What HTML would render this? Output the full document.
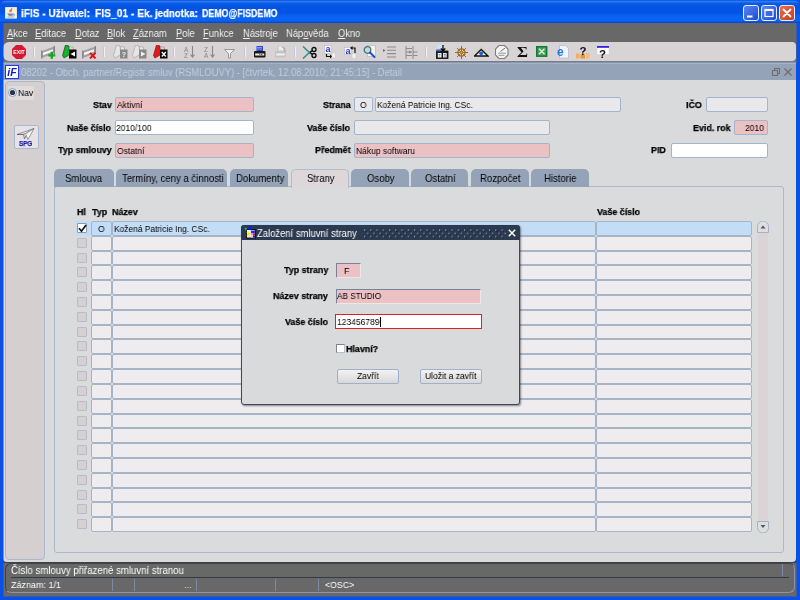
<!DOCTYPE html><html lang="cs"><head><meta charset="utf-8"><title>iFIS</title><style>
*{box-sizing:border-box;margin:0;padding:0}
html,body{width:800px;height:600px;overflow:hidden}
body{position:relative;background:#0a50e4;font-family:"Liberation Sans",Arial,sans-serif;font-size:10px;color:#000}
.a{position:absolute}
svg.a{will-change:transform}
.x{position:absolute;white-space:nowrap;line-height:14px;height:14px;transform-origin:0 50%;will-change:transform}
.b{font-weight:bold;-webkit-text-stroke:.25px}
#title{left:0;top:0;width:800px;height:23px;background:linear-gradient(#0a50da 0,#2a7af4 1.5px,#0a5ce8 3.5px,#0454e4 6px,#0454e4 13px,#0862f2 16px,#0862f2 21px,#0848d4 22.5px);border-radius:7px 7px 0 0}
#menubar{left:3px;top:23px;width:794px;height:19px;background:#696868}
#tbbg{left:3px;top:42px;width:794px;height:21px;background:#696868}
#toolbar{left:3px;top:42px;width:793px;height:19px;background:#d8d3d4;border-radius:6px 4px 4px 6px}
#mdi{left:3px;top:61px;width:793px;height:19px;background:linear-gradient(#747b8b 0,#747b8b 1px,#8a94a8 1px,#8a94a8 2px,#a4b2c8 2px,#a4b2c8 3px,#95a3b8 3px)}
#content{left:3px;top:80px;width:793px;height:482px;background:#d9dadb;border-radius:0 0 4px 4px}
#nav{left:5px;top:81px;width:40px;height:479px;background:#d6cfd0;border:1px solid #a9b8cc;border-radius:4px}
.fld{height:15px;border:1px solid #a3b4cb;border-radius:2px}
.pink{background:#ecc1c4}
.gray{background:#e9e9ec}
.white{background:#fff}
.tab{top:169px;height:18px;background:#95a3b8;border-radius:5px 5px 0 0}
.tab.sel{background:#ded7d9;border:1px solid #b0bccf;border-bottom:none;height:19px}
#panel{left:54px;top:186px;width:730px;height:367px;border:1px solid #acb8ca;border-radius:3px;background:#dadbdc}
.cell{height:15px;border:1px solid #a6b4c8;border-radius:2px;background:#eeecef}
.cell.sel{background:#c3ddf6}
.cb{width:10px;height:10px;background:#d4d0d4;border:1px solid #b9bcc6;border-radius:1px}
#status{left:3px;top:562px;width:794px;height:35px;background:#696868;border-top:1px solid #404040}
#dlg{left:241px;top:225px;width:279px;height:180px;background:#d9dadb;border:1px solid #3c4860;border-radius:3px;box-shadow:1px 1px 2px rgba(0,0,0,.45)}
#dlgt{left:241px;top:225px;width:279px;height:15px;background:#2c3a50;border-radius:3px 3px 0 0}
.btn{height:15px;border:1px solid #9fb0c8;border-radius:2px;background:linear-gradient(#f2f2f2,#d8d8d8)}
</style></head><body>
<div class="a" id="title"></div>
<div class="x b" style="left:20.5px;top:5.5px;font-size:11.61px;transform:scaleX(0.8698);color:#fff;">iFIS - Uživatel:</div>
<div class="x b" style="left:94.8px;top:5.5px;font-size:11.79px;transform:scaleX(0.8699);color:#fff;">FIS_01 - Ek.</div>
<div class="x b" style="left:154.5px;top:6.0px;font-size:11.10px;transform:scaleX(0.8697);color:#fff;">jednotka:</div>
<div class="x b" style="left:202.3px;top:6.5px;font-size:10.18px;transform:scaleX(0.8700);color:#fff;">DEMO@FISDEMO</div>
<div class="a" id="menubar"></div>
<div class="x" style="left:6.5px;top:26.0px;font-size:10.57px;transform:scaleX(0.8851);color:#f0f0f0;"><u>A</u>kce</div>
<div class="x" style="left:35.0px;top:26.0px;font-size:10.57px;transform:scaleX(0.8851);color:#f0f0f0;"><u>E</u>ditace</div>
<div class="x" style="left:75.2px;top:26.0px;font-size:10.57px;transform:scaleX(0.8846);color:#f0f0f0;"><u>D</u>otaz</div>
<div class="x" style="left:107.0px;top:26.0px;font-size:10.57px;transform:scaleX(0.8846);color:#f0f0f0;"><u>B</u>lok</div>
<div class="x" style="left:133.2px;top:26.0px;font-size:10.57px;transform:scaleX(0.8851);color:#f0f0f0;"><u>Z</u>áznam</div>
<div class="x" style="left:175.5px;top:26.0px;font-size:10.57px;transform:scaleX(0.8845);color:#f0f0f0;"><u>P</u>ole</div>
<div class="x" style="left:203.2px;top:26.0px;font-size:10.57px;transform:scaleX(0.8851);color:#f0f0f0;"><u>F</u>unkce</div>
<div class="x" style="left:242.5px;top:26.0px;font-size:10.57px;transform:scaleX(0.8849);color:#f0f0f0;"><u>N</u>ástroje</div>
<div class="x" style="left:286.2px;top:26.0px;font-size:10.57px;transform:scaleX(0.8848);color:#f0f0f0;">Náp<u>o</u>věda</div>
<div class="x" style="left:338.2px;top:26.0px;font-size:10.57px;transform:scaleX(0.8850);color:#f0f0f0;"><u>O</u>kno</div>
<div class="a" id="tbbg"></div><div class="a" id="toolbar"></div>
<svg class="a" style="left:5px;top:6.5px" width="12" height="11.5" viewBox="0 0 12 11.5"><rect x="0" y="0" width="12" height="11.500" rx=".8" fill="#f0efe8" stroke="#c8c8c0" stroke-width=".5"/><path d="M6.500 1.200c1.300 1.200-1.600 2.200-.3 3.900M5 2.500c.8.800-.8 1.500 0 2.500" stroke="#e87010" stroke-width="1.200" fill="none"/><path d="M2.500 6.500h6c0 1.500-.8 2.500-3 2.500s-3-1-3-2.500z" fill="#7088b0"/><path d="M8.500 7c1.500 0 1.500 1.800 0 1.600" stroke="#5878a8" stroke-width=".7" fill="none"/><path d="M2.500 10h6.500" stroke="#8898b8" stroke-width=".8"/></svg>
<svg class="a" style="left:743px;top:5px" width="16" height="16" viewBox="0 0 16 16"><defs><linearGradient id="g743" x1="0" y1="0" x2="1" y2="1"><stop offset="0" stop-color="#5c88f4"/><stop offset="1" stop-color="#1c48d0"/></linearGradient></defs><rect x=".5" y=".5" width="15" height="15" rx="2.500" fill="url(#g743)" stroke="#e8eefc" stroke-width="1"/><rect x="4" y="10.500" width="5.500" height="2" fill="#fff"/></svg>
<svg class="a" style="left:761px;top:5px" width="16" height="16" viewBox="0 0 16 16"><defs><linearGradient id="g761" x1="0" y1="0" x2="1" y2="1"><stop offset="0" stop-color="#5c88f4"/><stop offset="1" stop-color="#1c48d0"/></linearGradient></defs><rect x=".5" y=".5" width="15" height="15" rx="2.500" fill="url(#g761)" stroke="#e8eefc" stroke-width="1"/><rect x="4" y="4.500" width="8" height="7" fill="none" stroke="#fff" stroke-width="1.200"/><rect x="4" y="4" width="8" height="2" fill="#fff"/></svg>
<svg class="a" style="left:779px;top:5px" width="16" height="16" viewBox="0 0 16 16"><defs><linearGradient id="g779" x1="0" y1="0" x2="1" y2="1"><stop offset="0" stop-color="#ec7050"/><stop offset="1" stop-color="#c83818"/></linearGradient></defs><rect x=".5" y=".5" width="15" height="15" rx="2.500" fill="url(#g779)" stroke="#e8eefc" stroke-width="1"/><path d="M4.500 4.500l7 7M11.500 4.500l-7 7" stroke="#fff" stroke-width="1.800" stroke-linecap="round"/></svg>
<svg class="a" style="left:12px;top:45px" width="14" height="14" viewBox="0 0 14 14"><polygon points="4.100,0 9.900,0 14,4.100 14,9.900 9.900,14 4.100,14 0,9.900 0,4.100" fill="#d81830"/><text x="7" y="8.900" font-family="Liberation Sans,sans-serif" font-weight="bold" font-size="5.200" fill="#fff" text-anchor="middle">EXIT</text></svg>
<div class="a" style="left:32.8px;top:47px;width:1px;height:10px;background:#bcc8dc"></div><div class="a" style="left:33.8px;top:47px;width:1px;height:10px;background:#f0f0f6"></div>
<svg class="a" style="left:41px;top:45px" width="15" height="14" viewBox="0 0 15 14"><path d="M.8 6l12.500-4.500v7l-12.500 4.500z" fill="#a2a2a2"/><path d="M2 7.800l10-3.600v2.400l-10 3.600z" fill="#f8f8f8"/><path d="M.8 5.500v8M13.300 1v8" stroke="#787878" stroke-width="1.100"/><path d="M10.800 6.800v7M7.300 10.300h7" stroke="#10a820" stroke-width="2.300"/></svg>
<svg class="a" style="left:61.5px;top:45px" width="15" height="14" viewBox="0 0 15 14"><path d="M3.500 0l3.500 1 .8 8.500-5.800 3.500-1.500-2.500z" fill="#18b030" stroke="#085010" stroke-width=".7"/><path d="M7.500 1.500l4 .8v3l-4 .5z" fill="#d8d8d8" stroke="#909090" stroke-width=".5"/><rect x="7" y="4.500" width="7.500" height="9" fill="#080808"/><path d="M13 6.500v5l-4.500-2.500z" fill="#fff"/></svg>
<svg class="a" style="left:81.5px;top:45px" width="15" height="14" viewBox="0 0 15 14"><path d="M.8 6l12.500-4.500v7l-12.500 4.500z" fill="#a2a2a2"/><path d="M2 7.800l10-3.600v2.400l-10 3.600z" fill="#f8f8f8"/><path d="M.8 5.500v8M13.300 1v8" stroke="#787878" stroke-width="1.100"/><path d="M8 7.800l5.500 5.700M13.500 7.800l-5.500 5.700" stroke="#e01010" stroke-width="1.900"/></svg>
<div class="a" style="left:102.9px;top:47px;width:1px;height:10px;background:#bcc8dc"></div><div class="a" style="left:103.9px;top:47px;width:1px;height:10px;background:#f0f0f6"></div>
<svg class="a" style="left:112.5px;top:45px" width="15" height="14" viewBox="0 0 15 14"><path d="M3.500 0l3.500 1 .8 8.500-5.800 3.500-1.500-2.500z" fill="#e6e6e6" stroke="#a8a8a8" stroke-width=".7"/><path d="M7.500 1.500l4 .8v3l-4 .5z" fill="#e8e8e8" stroke="#909090" stroke-width=".5"/><rect x="7" y="4.500" width="7.500" height="9" fill="#888888"/><text x="10.800" y="12.300" font-size="7" font-weight="bold" font-family="Liberation Sans,sans-serif" fill="#f0f0f0" text-anchor="middle">?</text></svg>
<svg class="a" style="left:132px;top:45px" width="15" height="14" viewBox="0 0 15 14"><path d="M3.500 0l3.500 1 .8 8.500-5.800 3.500-1.500-2.500z" fill="#e6e6e6" stroke="#a8a8a8" stroke-width=".7"/><path d="M7.500 1.500l4 .8v3l-4 .5z" fill="#e8e8e8" stroke="#909090" stroke-width=".5"/><rect x="7" y="4.500" width="7.500" height="9" fill="#888888"/><path d="M9 6.500v5l4.500-2.500z" fill="#f0f0f0"/></svg>
<svg class="a" style="left:152.5px;top:45px" width="15" height="14" viewBox="0 0 15 14"><path d="M3.500 0l3.500 1 .8 8.500-5.800 3.500-1.500-2.500z" fill="#e81818" stroke="#801010" stroke-width=".7"/><path d="M7.500 1.500l4 .8v3l-4 .5z" fill="#f0c0c0" stroke="#909090" stroke-width=".5"/><rect x="7" y="4.500" width="7.500" height="9" fill="#080808"/><path d="M8.800 7l4 4.500M12.800 7l-4 4.500" stroke="#fff" stroke-width="1.300"/></svg>
<div class="a" style="left:173.3px;top:47px;width:1px;height:10px;background:#bcc8dc"></div><div class="a" style="left:174.3px;top:47px;width:1px;height:10px;background:#f0f0f6"></div>
<svg class="a" style="left:184px;top:45px" width="12" height="14" viewBox="0 0 12 14"><text x="0" y="6.500" font-size="6.500" font-family="Liberation Sans,sans-serif" fill="#888888">A</text><text x="0" y="13" font-size="6.500" font-family="Liberation Sans,sans-serif" fill="#888888">Z</text><path d="M8.500 1v11M6.500 9.500l2 2.500 2-2.500" stroke="#888888" stroke-width="1.100" fill="none"/></svg>
<svg class="a" style="left:204px;top:45px" width="12" height="14" viewBox="0 0 12 14"><text x="0" y="6.500" font-size="6.500" font-family="Liberation Sans,sans-serif" fill="#888888">Z</text><text x="0" y="13" font-size="6.500" font-family="Liberation Sans,sans-serif" fill="#888888">A</text><path d="M8.500 1v11M6.500 9.500l2 2.500 2-2.500" stroke="#888888" stroke-width="1.100" fill="none"/></svg>
<svg class="a" style="left:224px;top:48.5px" width="11" height="9.5" viewBox="0 0 11 9.5"><path d="M.5.500h10l-4 4v4.500h-2v-4.500z" fill="#f0f0f0" stroke="#909090" stroke-width=".9"/></svg>
<div class="a" style="left:243.7px;top:47px;width:1px;height:10px;background:#bcc8dc"></div><div class="a" style="left:244.7px;top:47px;width:1px;height:10px;background:#f0f0f6"></div>
<svg class="a" style="left:253.5px;top:46px" width="11.5" height="12" viewBox="0 0 11.5 12"><rect x="2.500" y="0" width="6.500" height="5" fill="#3048d8"/><path d="M3 1.500h5M3 3h5" stroke="#c0c8ff" stroke-width=".6"/><rect x="0" y="5" width="11.500" height="6.500" rx="1" fill="#181818"/><rect x="1.200" y="7.500" width="9" height="2" fill="#f0f0f0"/><rect x="5" y="7.800" width="1.500" height="1.300" fill="#20b020"/><rect x="7" y="7.800" width="1.500" height="1.300" fill="#e02020"/></svg>
<svg class="a" style="left:274.5px;top:46px" width="11.5" height="12" viewBox="0 0 11.5 12"><rect x="3" y="0" width="6" height="5" fill="#ececec" stroke="#b0b0b0" stroke-width=".6"/><rect x="0" y="5" width="11" height="6.500" rx="1" fill="#c4c4c4"/><rect x="1.200" y="7.500" width="8.500" height="2" fill="#f0f0f0"/><path d="M7 1l3 2v3" stroke="#a0a0a0" stroke-width="1" fill="none"/></svg>
<div class="a" style="left:293.8px;top:47px;width:1px;height:10px;background:#bcc8dc"></div><div class="a" style="left:294.8px;top:47px;width:1px;height:10px;background:#f0f0f6"></div>
<svg class="a" style="left:301.5px;top:45.5px" width="15.5" height="13" viewBox="0 0 15.5 13"><path d="M1 .5l8 7.500M1 12.500l8-7.500" stroke="#389088" stroke-width="1.600" fill="none"/><circle cx="12" cy="3.500" r="2" fill="none" stroke="#101010" stroke-width="1.400"/><circle cx="12" cy="9.500" r="2" fill="none" stroke="#101010" stroke-width="1.400"/><path d="M8 6.500l2.500-2M8 6.500l2.500 2" stroke="#101010" stroke-width="1.200"/></svg>
<svg class="a" style="left:324px;top:45px" width="12" height="14" viewBox="0 0 12 14"><rect x=".5" y=".5" width="6.500" height="8" fill="#fff" stroke="#b8b8b8" stroke-width=".6"/><text x="1.500" y="7" font-size="9" font-family="Liberation Sans,sans-serif" fill="#2030e0" font-weight="bold">a</text><path d="M2.500 9v2.500h4" stroke="#101010" stroke-width="1.200" fill="none"/><path d="M6 9.500l2.500 2-2.500 2z" fill="#101010"/><rect x="8" y="8" width="3.500" height="5" fill="#f4f4f4" stroke="#c0c0c0" stroke-width=".5"/></svg>
<svg class="a" style="left:344px;top:45px" width="12.5" height="14" viewBox="0 0 12.5 14"><rect x=".5" y="2.500" width="6.500" height="7" fill="#fff" stroke="#b8b8b8" stroke-width=".6"/><text x="1.500" y="9" font-size="9" font-family="Liberation Sans,sans-serif" fill="#2030e0" font-weight="bold">a</text><path d="M11 8v-5h-3.500" stroke="#101010" stroke-width="1.200" fill="none"/><path d="M8.500 1l-2.500 2 2.500 2z" fill="#101010"/><rect x="8" y="8.500" width="4" height="5" fill="#f0f0f0" stroke="#c0c0c0" stroke-width=".5"/></svg>
<svg class="a" style="left:363px;top:45px" width="14.5" height="14" viewBox="0 0 14.5 14"><rect x="4.500" y=".5" width="8" height="11" fill="#f4f4ec" stroke="#b0b0a8" stroke-width=".6"/><circle cx="4.500" cy="5" r="3.300" fill="#b8e0e0" stroke="#507080" stroke-width="1.300"/><path d="M7 7.500l4.500 4.500" stroke="#2050c0" stroke-width="2" stroke-linecap="round"/></svg>
<svg class="a" style="left:383px;top:46px" width="13" height="12" viewBox="0 0 13 12"><path d="M4 1h9M4 4.300h9M4 7.600h9M4 11h9" stroke="#8c8c8c" stroke-width="1.100"/><path d="M0 3l2.500 1.500-2.500 1.500z" fill="#707070"/></svg>
<svg class="a" style="left:405px;top:45.5px" width="13" height="13" viewBox="0 0 13 13"><path d="M1 0v13M8 0v13" stroke="#8c8c8c" stroke-width="1"/><path d="M1 2.500h6M1 6h6M1 9.500h6M8 6h4.500M8 9.500h4.500" stroke="#8c8c8c" stroke-width="1"/><path d="M4 4.500l2.500 1.500-2.500 1.500z" fill="#808080"/></svg>
<div class="a" style="left:425.2px;top:47px;width:1px;height:10px;background:#bcc8dc"></div><div class="a" style="left:426.2px;top:47px;width:1px;height:10px;background:#f0f0f6"></div>
<svg class="a" style="left:435.5px;top:45px" width="12.5" height="14" viewBox="0 0 12.5 14"><rect x="1" y="0" width="7" height="3" fill="#c8e4f8"/><path d="M7 0v5.500M4.800 3.500l2.200 2.500 2.200-2.500" stroke="#080808" stroke-width="1.300" fill="none"/><rect x=".5" y="6" width="11.500" height="7.500" fill="#181820" stroke="#080808" stroke-width=".8"/><rect x="1.800" y="8" width="3.700" height="4.500" fill="#fff"/><rect x="7" y="8" width="3.700" height="4.500" fill="#e4e4f0"/><rect x=".5" y="4.500" width="4" height="2" fill="#3060d8"/><path d="M2.500 9.500h2M2.500 11h2M7.800 9.500h2M7.800 11h2" stroke="#505060" stroke-width=".6"/></svg>
<svg class="a" style="left:454.5px;top:45.5px" width="13" height="13" viewBox="0 0 13 13"><circle cx="6.500" cy="6.500" r="3.600" fill="none" stroke="#a06820" stroke-width="1.300"/><path d="M6.500 0v13M0 6.500h13M2 2l9 9M11 2l-9 9" stroke="#a06820" stroke-width="1"/><circle cx="6.500" cy="6.500" r="1.300" fill="#c89040"/></svg>
<svg class="a" style="left:474px;top:47px" width="14.5" height="9.5" viewBox="0 0 14.5 9.5"><path d="M3 2l1.500 1.500M11.500 2l-1.500 1.500M7.200 0v2" stroke="#e8d020" stroke-width=".9"/><path d="M.5 9l6.700-6.500 6.800 6.500z" fill="#f0f0e8" stroke="#101010" stroke-width="1.300"/><circle cx="7.200" cy="6.300" r="1.900" fill="#1060f0"/></svg>
<svg class="a" style="left:494.5px;top:45px" width="13.5" height="14" viewBox="0 0 13.5 14"><polygon points="4,0.500 9.500,0.500 13,4 13,10 9.500,13.500 4,13.500 .5,10 .5,4" fill="#f4f4f4" stroke="#7c7c7c" stroke-width="1.100"/><path d="M3 8.200h8M3.500 10.300h6" stroke="#8c8c8c" stroke-width=".9"/><path d="M5.500 6.500l4.500-3.500" stroke="#6c6c6c" stroke-width="1"/></svg>
<svg class="a" style="left:516px;top:44px" width="13" height="15" viewBox="0 0 13 15"><text x="6.500" y="13" font-size="15.500" font-weight="bold" font-family="Liberation Serif,serif" fill="#101010" text-anchor="middle" textLength="11" lengthAdjust="spacingAndGlyphs">Σ</text></svg>
<svg class="a" style="left:536px;top:46px" width="11.5" height="11" viewBox="0 0 11.5 11"><rect x=".7" y=".7" width="10" height="9.500" fill="#4c9c60" stroke="#107830" stroke-width="1.400"/><path d="M3 2.800l5.500 5.500M8.500 2.800l-5.500 5.500" stroke="#d8f0d8" stroke-width="1.400"/></svg>
<svg class="a" style="left:556.5px;top:45px" width="12" height="14" viewBox="0 0 12 14"><path d="M2.500.5h6l3 3v9.500h-9z" fill="#f4f4fc" stroke="#a8b0c8" stroke-width=".6"/><text x="0" y="11" font-size="12" font-weight="bold" font-family="Liberation Sans,sans-serif" fill="#2878e0">e</text></svg>
<svg class="a" style="left:576px;top:45px" width="14" height="14" viewBox="0 0 14 14"><rect x="0" y="8.500" width="3.500" height="5" fill="#f0b060"/><rect x="4.500" y="9.500" width="4.500" height="4" fill="#e89838"/><rect x="10" y="8" width="3.500" height="5.500" fill="#f0c080"/><text x="7" y="9.500" font-size="11.500" font-weight="bold" font-family="Liberation Sans,sans-serif" fill="#101010" text-anchor="middle">?</text></svg>
<svg class="a" style="left:597px;top:46px" width="12" height="13" viewBox="0 0 12 13"><rect x="0" y="0" width="12" height="8.500" fill="#fff" stroke="#c8c8c8" stroke-width=".5"/><rect x="0" y="0" width="12" height="1.800" fill="#3020e0"/><text x="5.500" y="12" font-size="11.500" font-weight="bold" font-family="Liberation Sans,sans-serif" fill="#101010" text-anchor="middle">?</text></svg>
<div class="a" id="mdi"></div>
<svg class="a" style="left:5px;top:65px" width="14" height="14" viewBox="0 0 14 14"><rect x=".5" y=".5" width="13" height="13" fill="#fff" stroke="#2838e0" stroke-width="1"/><text x="7" y="11" font-size="10.500" font-weight="bold" font-style="italic" font-family="Liberation Sans,sans-serif" fill="#1020c8" text-anchor="middle">iF</text></svg>
<svg class="a" style="left:772px;top:68px" width="8" height="8" viewBox="0 0 8 8"><rect x="2.500" y=".5" width="5" height="5" fill="none" stroke="#6c6c6c" stroke-width="1"/><rect x=".5" y="2.500" width="5" height="5" fill="#95a3b8" stroke="#6c6c6c" stroke-width="1"/></svg>
<svg class="a" style="left:784px;top:68px" width="8" height="8" viewBox="0 0 8 8"><path d="M.5.500l7 7M7.500.500l-7 7" stroke="#6c6c6c" stroke-width="1.200"/></svg>
<div class="x" style="left:20.5px;top:65.5px;font-size:10.15px;transform:scaleX(0.9283);color:#c2cddd;">08202 - Obch. partner/Registr smluv (RSMLOUVY) - [čtvrtek, 12.08.2010; 21:45:15] - Detail</div>
<div class="a" id="content"></div>
<div class="a" id="nav"></div>
<div class="a" style="left:8px;top:86px;width:26px;height:14px;background:#e0dcde;border-radius:2px"></div>
<svg class="a" style="left:8px;top:88px" width="9" height="9" viewBox="0 0 9 9"><circle cx="4.500" cy="4.500" r="4" fill="#f0f0f4" stroke="#8c9cb4" stroke-width="1"/><circle cx="4.500" cy="4.500" r="2.600" fill="#28344c"/></svg>
<div class="x" style="left:18.2px;top:85.6px;font-size:9.29px;transform:scaleX(0.9260);">Nav</div>
<div class="a" style="left:14px;top:125px;width:25px;height:24px;background:#e6e2e6;border:1px solid #a8b8d0;border-radius:2px"></div>
<svg class="a" style="left:16px;top:127px" width="21" height="14" viewBox="0 0 21 14"><path d="M1 7.500l17-6-6 11-2.500-5.500z" fill="#fcfcfc" stroke="#707070" stroke-width=".7"/><path d="M18 1.500l-10.500 6 1 4.500 1.500-3.500" fill="#d8d8d8" stroke="#505050" stroke-width=".6"/><path d="M1 7.500l6.500 0" stroke="#505050" stroke-width=".6"/></svg>
<div class="x b" style="left:18.8px;top:137.3px;font-size:6.80px;transform:scaleX(0.9266);color:#2020a8;">SPG</div>
<div class="a fld pink" style="left:115px;top:97px;width:139px;"></div>
<div class="a fld white" style="left:115px;top:120px;width:139px;"></div>
<div class="a fld pink" style="left:115px;top:143px;width:139px;"></div>
<div class="a fld gray" style="left:354px;top:97px;width:19px;"></div>
<div class="a fld gray" style="left:375px;top:97px;width:246px;"></div>
<div class="a fld gray" style="left:354px;top:120px;width:196px;"></div>
<div class="a fld pink" style="left:354px;top:143px;width:196px;"></div>
<div class="a fld gray" style="left:706px;top:97px;width:62px;"></div>
<div class="a fld pink" style="left:734px;top:120px;width:34px;"></div>
<div class="a fld white" style="left:671px;top:143px;width:97px;"></div>
<div class="x b" style="left:92.5px;top:97.5px;font-size:9.61px;transform:scaleX(0.9276);">Stav</div>
<div class="x b" style="left:67.3px;top:120.5px;font-size:9.61px;transform:scaleX(0.9275);">Naše číslo</div>
<div class="x b" style="left:57.6px;top:143.2px;font-size:9.61px;transform:scaleX(0.9275);">Typ smlouvy</div>
<div class="x b" style="left:322.6px;top:97.5px;font-size:9.61px;transform:scaleX(0.9276);">Strana</div>
<div class="x b" style="left:307.3px;top:120.5px;font-size:9.61px;transform:scaleX(0.9276);">Vaše číslo</div>
<div class="x b" style="left:314.7px;top:143.2px;font-size:9.61px;transform:scaleX(0.9276);">Předmět</div>
<div class="x b" style="left:685.7px;top:97.5px;font-size:9.61px;transform:scaleX(0.9273);">IČO</div>
<div class="x b" style="left:692.7px;top:120.5px;font-size:9.61px;transform:scaleX(0.9274);">Evid. rok</div>
<div class="x b" style="left:651.0px;top:143.2px;font-size:9.61px;transform:scaleX(0.9273);">PID</div>
<div class="x" style="left:116.7px;top:98.0px;font-size:9.18px;transform:scaleX(0.9265);">Aktivní</div>
<div class="x" style="left:116.1px;top:121.0px;font-size:9.18px;transform:scaleX(0.9264);">2010/100</div>
<div class="x" style="left:116.7px;top:143.7px;font-size:9.18px;transform:scaleX(0.9263);">Ostatní</div>
<div class="x" style="left:359.9px;top:98.0px;font-size:9.18px;transform:scaleX(0.9259);">O</div>
<div class="x" style="left:376.5px;top:98.0px;font-size:9.07px;transform:scaleX(0.9268);">Kožená Patricie Ing. CSc.</div>
<div class="x" style="left:355.8px;top:143.7px;font-size:9.18px;transform:scaleX(0.9265);">Nákup softwaru</div>
<div class="x" style="left:745.4px;top:121.0px;font-size:9.18px;transform:scaleX(0.9265);">2010</div>
<div class="a" id="panel"></div>
<div class="a tab" style="left:54px;width:60px"></div>
<div class="a tab" style="left:116px;width:111px"></div>
<div class="a tab" style="left:230px;width:58px"></div>
<div class="a tab sel" style="left:291px;width:58px"></div>
<div class="a tab" style="left:351px;width:58px"></div>
<div class="a tab" style="left:411px;width:57px"></div>
<div class="a tab" style="left:471px;width:58px"></div>
<div class="a tab" style="left:531px;width:58px"></div>
<div class="x" style="left:65.4px;top:172.0px;font-size:10.31px;transform:scaleX(0.9274);">Smlouva</div>
<div class="x" style="left:121.9px;top:172.0px;font-size:10.31px;transform:scaleX(0.9274);">Termíny, ceny a činnosti</div>
<div class="x" style="left:236.2px;top:172.0px;font-size:10.31px;transform:scaleX(0.9274);">Dokumenty</div>
<div class="x" style="left:306.8px;top:172.0px;font-size:10.31px;transform:scaleX(0.9272);">Strany</div>
<div class="x" style="left:366.5px;top:172.0px;font-size:10.31px;transform:scaleX(0.9272);">Osoby</div>
<div class="x" style="left:425.2px;top:172.0px;font-size:10.31px;transform:scaleX(0.9271);">Ostatní</div>
<div class="x" style="left:480.3px;top:172.0px;font-size:10.31px;transform:scaleX(0.9271);">Rozpočet</div>
<div class="x" style="left:544.2px;top:172.0px;font-size:10.31px;transform:scaleX(0.9273);">Historie</div>
<div class="x b" style="left:76.5px;top:204.8px;font-size:9.61px;transform:scaleX(0.9277);">Hl</div>
<div class="x b" style="left:91.5px;top:204.8px;font-size:9.61px;transform:scaleX(0.9276);">Typ</div>
<div class="x b" style="left:112.0px;top:204.8px;font-size:9.61px;transform:scaleX(0.9276);">Název</div>
<div class="x b" style="left:597.0px;top:204.8px;font-size:9.61px;transform:scaleX(0.9276);">Vaše číslo</div>
<div class="a" style="left:76px;top:221.00px;width:16px;height:15px;background:#c3ddf6"></div>
<div class="a cb" style="left:77px;top:223.00px;background:#fff;border-color:#8a98ad"></div>
<div class="a cell sel" style="left:91px;top:221px;width:21px;height:15px"></div>
<div class="a cell sel" style="left:112px;top:221px;width:484px;height:15px"></div>
<div class="a cell sel" style="left:596px;top:221px;width:156px;height:15px"></div>
<div class="a cb" style="left:77px;top:237.81px"></div>
<div class="a cell" style="left:91px;top:236px;width:21px;height:15px"></div>
<div class="a cell" style="left:112px;top:236px;width:484px;height:15px"></div>
<div class="a cell" style="left:596px;top:236px;width:156px;height:15px"></div>
<div class="a cb" style="left:77px;top:252.62px"></div>
<div class="a cell" style="left:91px;top:251px;width:21px;height:14px"></div>
<div class="a cell" style="left:112px;top:251px;width:484px;height:14px"></div>
<div class="a cell" style="left:596px;top:251px;width:156px;height:14px"></div>
<div class="a cb" style="left:77px;top:267.43px"></div>
<div class="a cell" style="left:91px;top:265px;width:21px;height:15px"></div>
<div class="a cell" style="left:112px;top:265px;width:484px;height:15px"></div>
<div class="a cell" style="left:596px;top:265px;width:156px;height:15px"></div>
<div class="a cb" style="left:77px;top:282.24px"></div>
<div class="a cell" style="left:91px;top:280px;width:21px;height:15px"></div>
<div class="a cell" style="left:112px;top:280px;width:484px;height:15px"></div>
<div class="a cell" style="left:596px;top:280px;width:156px;height:15px"></div>
<div class="a cb" style="left:77px;top:297.05px"></div>
<div class="a cell" style="left:91px;top:295px;width:21px;height:15px"></div>
<div class="a cell" style="left:112px;top:295px;width:484px;height:15px"></div>
<div class="a cell" style="left:596px;top:295px;width:156px;height:15px"></div>
<div class="a cb" style="left:77px;top:311.86px"></div>
<div class="a cell" style="left:91px;top:310px;width:21px;height:15px"></div>
<div class="a cell" style="left:112px;top:310px;width:484px;height:15px"></div>
<div class="a cell" style="left:596px;top:310px;width:156px;height:15px"></div>
<div class="a cb" style="left:77px;top:326.67px"></div>
<div class="a cell" style="left:91px;top:325px;width:21px;height:14px"></div>
<div class="a cell" style="left:112px;top:325px;width:484px;height:14px"></div>
<div class="a cell" style="left:596px;top:325px;width:156px;height:14px"></div>
<div class="a cb" style="left:77px;top:341.48px"></div>
<div class="a cell" style="left:91px;top:339px;width:21px;height:15px"></div>
<div class="a cell" style="left:112px;top:339px;width:484px;height:15px"></div>
<div class="a cell" style="left:596px;top:339px;width:156px;height:15px"></div>
<div class="a cb" style="left:77px;top:356.29px"></div>
<div class="a cell" style="left:91px;top:354px;width:21px;height:15px"></div>
<div class="a cell" style="left:112px;top:354px;width:484px;height:15px"></div>
<div class="a cell" style="left:596px;top:354px;width:156px;height:15px"></div>
<div class="a cb" style="left:77px;top:371.10px"></div>
<div class="a cell" style="left:91px;top:369px;width:21px;height:15px"></div>
<div class="a cell" style="left:112px;top:369px;width:484px;height:15px"></div>
<div class="a cell" style="left:596px;top:369px;width:156px;height:15px"></div>
<div class="a cb" style="left:77px;top:385.91px"></div>
<div class="a cell" style="left:91px;top:384px;width:21px;height:15px"></div>
<div class="a cell" style="left:112px;top:384px;width:484px;height:15px"></div>
<div class="a cell" style="left:596px;top:384px;width:156px;height:15px"></div>
<div class="a cb" style="left:77px;top:400.72px"></div>
<div class="a cell" style="left:91px;top:399px;width:21px;height:15px"></div>
<div class="a cell" style="left:112px;top:399px;width:484px;height:15px"></div>
<div class="a cell" style="left:596px;top:399px;width:156px;height:15px"></div>
<div class="a cb" style="left:77px;top:415.53px"></div>
<div class="a cell" style="left:91px;top:414px;width:21px;height:14px"></div>
<div class="a cell" style="left:112px;top:414px;width:484px;height:14px"></div>
<div class="a cell" style="left:596px;top:414px;width:156px;height:14px"></div>
<div class="a cb" style="left:77px;top:430.34px"></div>
<div class="a cell" style="left:91px;top:428px;width:21px;height:15px"></div>
<div class="a cell" style="left:112px;top:428px;width:484px;height:15px"></div>
<div class="a cell" style="left:596px;top:428px;width:156px;height:15px"></div>
<div class="a cb" style="left:77px;top:445.15px"></div>
<div class="a cell" style="left:91px;top:443px;width:21px;height:15px"></div>
<div class="a cell" style="left:112px;top:443px;width:484px;height:15px"></div>
<div class="a cell" style="left:596px;top:443px;width:156px;height:15px"></div>
<div class="a cb" style="left:77px;top:459.96px"></div>
<div class="a cell" style="left:91px;top:458px;width:21px;height:15px"></div>
<div class="a cell" style="left:112px;top:458px;width:484px;height:15px"></div>
<div class="a cell" style="left:596px;top:458px;width:156px;height:15px"></div>
<div class="a cb" style="left:77px;top:474.77px"></div>
<div class="a cell" style="left:91px;top:473px;width:21px;height:15px"></div>
<div class="a cell" style="left:112px;top:473px;width:484px;height:15px"></div>
<div class="a cell" style="left:596px;top:473px;width:156px;height:15px"></div>
<div class="a cb" style="left:77px;top:489.58px"></div>
<div class="a cell" style="left:91px;top:488px;width:21px;height:14px"></div>
<div class="a cell" style="left:112px;top:488px;width:484px;height:14px"></div>
<div class="a cell" style="left:596px;top:488px;width:156px;height:14px"></div>
<div class="a cb" style="left:77px;top:504.39px"></div>
<div class="a cell" style="left:91px;top:502px;width:21px;height:15px"></div>
<div class="a cell" style="left:112px;top:502px;width:484px;height:15px"></div>
<div class="a cell" style="left:596px;top:502px;width:156px;height:15px"></div>
<div class="a cb" style="left:77px;top:519.20px"></div>
<div class="a cell" style="left:91px;top:517px;width:21px;height:15px"></div>
<div class="a cell" style="left:112px;top:517px;width:484px;height:15px"></div>
<div class="a cell" style="left:596px;top:517px;width:156px;height:15px"></div>
<svg class="a" style="left:78px;top:223.5px" width="9" height="9" viewBox="0 0 9 9"><path d="M1 4.200l2.500 3 4.500-6.200" stroke="#101018" stroke-width="1.700" fill="none"/></svg>
<div class="x" style="left:97.9px;top:222.0px;font-size:9.18px;transform:scaleX(0.9259);">O</div>
<div class="x" style="left:114.2px;top:222.0px;font-size:9.07px;transform:scaleX(0.9268);">Kožená Patricie Ing. CSc.</div>
<div class="a" style="left:758px;top:232px;width:10px;height:290px;background:#dbd4d6"></div>
<svg class="a" style="left:757px;top:221px" width="12" height="12" viewBox="0 0 12 12"><path d="M.5 11.500v-6a5.500 5.500 0 0 1 11 0v6z" fill="#dedee0" stroke="#a4b2c6" stroke-width="1"/><path d="M3.500 7.500l2.500-3 2.500 3z" fill="#48566e"/></svg>
<svg class="a" style="left:757px;top:521px" width="12" height="12" viewBox="0 0 12 12"><path d="M.5.500v6a5.500 5.500 0 0 0 11 0v-6z" fill="#dedee0" stroke="#a4b2c6" stroke-width="1"/><path d="M3.500 4l2.500 3 2.500-3z" fill="#48566e"/></svg>
<div class="a" id="dlg"></div><div class="a" id="dlgt"></div>
<div class="x" style="left:256.5px;top:226.5px;font-size:10.21px;transform:scaleX(0.9260);color:#fff;">Založení smluvní strany</div>
<svg class="a" style="left:243.5px;top:226px" width="12" height="12.5" viewBox="0 0 12 12.5"><rect x="2.500" y="3.500" width="9" height="8.500" fill="#f4f0f4" stroke="#080810" stroke-width=".9"/><rect x="7" y="4.500" width="4" height="3" fill="#2838e0"/><rect x="7" y="7.500" width="2" height="2" fill="#f0a0a0"/><rect x="9" y="7.500" width="2" height="2" fill="#e02020"/><rect x="7" y="9.500" width="2" height="2" fill="#f8c0c0"/><rect x="9" y="9.500" width="2" height="2" fill="#1828d8"/><path d="M4.500 5l1 2 2 .5-1.800 1 .3 2.500-1.500-1.800-2 .8 1-2-1.200-1.500 2 .2z" fill="#f0e810"/><circle cx="6" cy="2.200" r="2" fill="#1020d0"/><path d="M.5 1.500l1.500 4 1-3.500z" fill="#30b050"/></svg>
<svg class="a" style="left:364px;top:228.5px" width="142" height="10" viewBox="0 0 142 10"><defs><pattern id="dp" width="6.250" height="6.500" patternUnits="userSpaceOnUse"><rect x="0" y=".5" width="1.200" height="1.200" fill="#a4aed4"/><rect x="1" y="1.500" width="1.100" height="1.100" fill="#101828"/><rect x="3.100" y="3.750" width="1.200" height="1.200" fill="#a4aed4"/><rect x="4.100" y="4.750" width="1.100" height="1.100" fill="#101828"/></pattern></defs><rect width="142" height="10" fill="url(#dp)"/></svg>
<svg class="a" style="left:508px;top:229px" width="8" height="8" viewBox="0 0 8 8"><path d="M.8.800l6.400 6.400M7.200.800l-6.400 6.400" stroke="#fff" stroke-width="1.500"/></svg>
<div class="a fld pink" style="left:336px;top:263px;width:25px;border-color:#78829a #f0e6e8 #f0e6e8 #78829a;border-radius:1px"></div>
<div class="a fld pink" style="left:336px;top:289px;width:145px;border-color:#78829a #f0e6e8 #f0e6e8 #78829a;border-radius:1px"></div>
<div class="a fld white" style="left:335px;top:314px;width:147px;border-color:#e02020;border-radius:0"></div>
<div class="a" style="left:336px;top:344px;width:9px;height:9px;background:#fff;border:1px solid #7a8498;border-right-color:#b8c0cc;border-bottom-color:#b8c0cc"></div>
<div class="a btn" style="left:337px;top:369px;width:62px"></div>
<div class="a btn" style="left:420px;top:369px;width:62px"></div>
<div class="x b" style="left:283.9px;top:263.3px;font-size:9.61px;transform:scaleX(0.9275);">Typ strany</div>
<div class="x" style="left:344.4px;top:263.8px;font-size:9.18px;transform:scaleX(0.9255);">F</div>
<div class="x b" style="left:273.3px;top:288.8px;font-size:9.61px;transform:scaleX(0.9275);">Název strany</div>
<div class="x" style="left:337.1px;top:289.3px;font-size:8.86px;transform:scaleX(0.9271);">AB STUDIO</div>
<div class="x b" style="left:285.2px;top:314.5px;font-size:9.61px;transform:scaleX(0.9276);">Vaše číslo</div>
<div class="x" style="left:337.3px;top:315.0px;font-size:9.18px;transform:scaleX(0.9264);">123456789</div>
<div class="a" style="left:380px;top:317px;width:1px;height:10px;background:#000"></div>
<div class="x b" style="left:345.5px;top:341.5px;font-size:9.61px;transform:scaleX(0.9275);">Hlavní?</div>
<div class="x" style="left:357.2px;top:369.0px;font-size:9.18px;transform:scaleX(0.9262);">Zavřít</div>
<div class="x" style="left:425.2px;top:369.0px;font-size:9.18px;transform:scaleX(0.9266);">Uložit a zavřít</div>
<div class="a" id="status"></div>
<div class="a" style="left:5px;top:563px;width:790px;height:30px;border:1px solid #3e4452;border-right-color:#8c94a6;border-bottom-color:#8c94a6;border-radius:6px"></div>
<div class="a" style="left:11px;top:577px;width:778px;height:1px;background:#343a4a"></div>
<div class="a" style="left:112px;top:579px;width:1px;height:12px;background:#7c88a4"></div>
<div class="a" style="left:133.5px;top:579px;width:1px;height:12px;background:#7c88a4"></div>
<div class="a" style="left:196px;top:579px;width:1px;height:12px;background:#7c88a4"></div>
<div class="a" style="left:275px;top:579px;width:1px;height:12px;background:#7c88a4"></div>
<div class="a" style="left:318.2px;top:579px;width:1px;height:12px;background:#7c88a4"></div>
<div class="a" style="left:782.2px;top:564px;width:1px;height:12px;background:#7c88a4"></div>
<div class="x" style="left:184.0px;top:578.0px;font-size:9.72px;transform:scaleX(0.9250);color:#ddd;">...</div>
<div class="x" style="left:10.5px;top:564.0px;font-size:10.37px;transform:scaleX(0.9266);color:#fff;">Číslo smlouvy přiřazené smluvní stranou</div>
<div class="x" style="left:10.5px;top:578.0px;font-size:9.72px;transform:scaleX(0.9257);color:#fff;">Záznam: 1/1</div>
<div class="x" style="left:325.1px;top:578.0px;font-size:9.45px;transform:scaleX(0.9269);color:#fff;">&lt;OSC&gt;</div>
<div class="a" style="left:3px;top:23px;width:1px;height:574px;background:rgba(10,79,224,.5)"></div>
<div class="a" style="left:796px;top:23px;width:1px;height:574px;background:rgba(10,79,224,.5)"></div>
<div class="a" style="left:3px;top:596px;width:794px;height:1px;background:rgba(10,79,224,.5)"></div>
</body></html>
